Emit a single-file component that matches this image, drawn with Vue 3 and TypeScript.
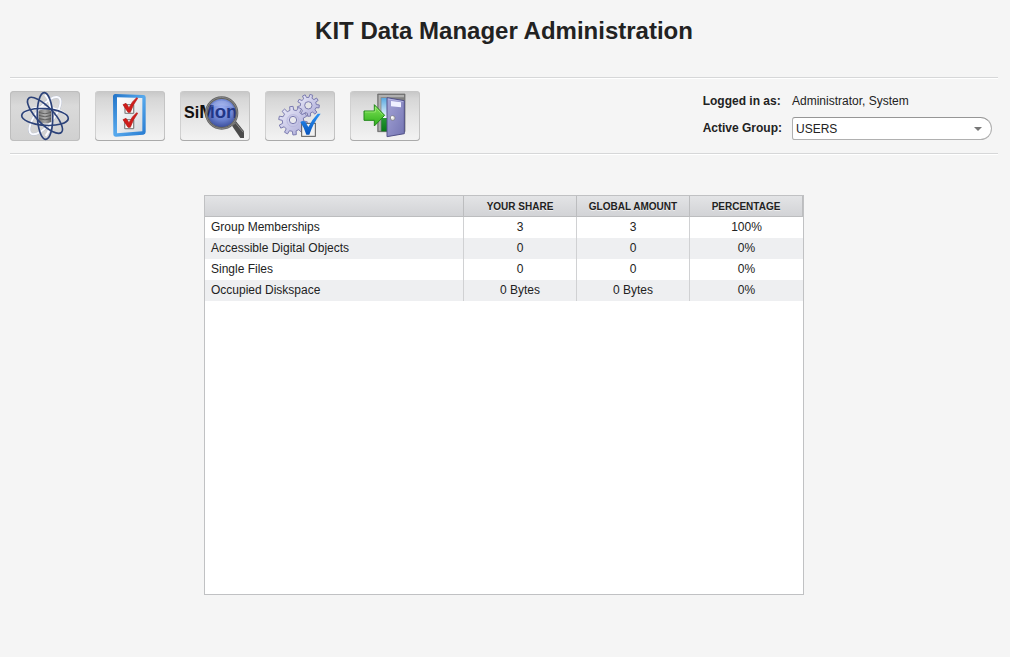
<script setup lang="ts">
import { ref } from 'vue'

interface StatRow {
  name: string
  share: string
  total: string
  percentage: string
}

const activeView = ref('overview')
const group = ref('USERS')
const groups: string[] = ['USERS']

const rows: StatRow[] = [
  { name: 'Group Memberships', share: '3', total: '3', percentage: '100%' },
  { name: 'Accessible Digital Objects', share: '0', total: '0', percentage: '0%' },
  { name: 'Single Files', share: '0', total: '0', percentage: '0%' },
  { name: 'Occupied Diskspace', share: '0 Bytes', total: '0 Bytes', percentage: '0%' },
]

// Outline of a cog centred on the origin.
function gear(teeth: number, inner: number, outer: number, turn: number): string {
  const points: string[] = []
  const step = (Math.PI * 2) / teeth
  for (let i = 0; i < teeth; i++) {
    const mid = i * step + turn
    const corners: [number, number][] = [
      [-0.28, inner],
      [-0.19, outer],
      [0.19, outer],
      [0.28, inner],
    ]
    for (const [offset, radius] of corners) {
      const angle = mid + offset * step
      points.push(`${(Math.cos(angle) * radius).toFixed(1)} ${(Math.sin(angle) * radius).toFixed(1)}`)
    }
  }
  return `M${points.join('L')}Z`
}

const largeGear = gear(10, 32, 43, 0.2)
const smallGear = gear(9, 24, 33, 0.1)
</script>

<template>
  <div class="page">
    <h1 class="title">KIT Data Manager Administration</h1>

    <header class="bar">
      <nav class="tools" aria-label="Views">
        <button type="button" class="tool" :class="{ active: activeView === 'overview' }" aria-label="Overview" @click="activeView = 'overview'">
          <svg viewBox="15 18 210 150" aria-hidden="true">
            <defs>
              <linearGradient id="disk" x1="0" x2="1" y1="0" y2="0">
                <stop offset="0" stop-color="#6f6f6f" />
                <stop offset=".5" stop-color="#a9a9a9" />
                <stop offset="1" stop-color="#626262" />
              </linearGradient>
            </defs>
            <g fill="none" stroke="#b4bccf" stroke-width="8">
              <ellipse cx="120" cy="92" rx="68" ry="26" transform="rotate(-52 120 92)" />
            </g>
            <g fill="none" stroke="#fafbff" stroke-width="6">
              <ellipse cx="120" cy="92" rx="68" ry="26" transform="rotate(-52 120 92)" />
              <path d="M120 29q19 20 19 68q-2 38-17 56M55 84q26-18 66-17q50 4 64 27" />
            </g>
            <path d="M101 77q19-9 38 0v34q-19 8-38 0z" fill="url(#disk)" />
            <path d="M102 83q18 7 36 0M102 92q18 7 36 0M102 101q18 7 36 0" fill="none" stroke="#454545" stroke-width="2" />
            <path d="M103 86q17 7 34 0M103 95q17 7 34 0" fill="none" stroke="#ccc" stroke-width="1" />
            <g fill="none" stroke="#2c4279" stroke-width="5">
              <ellipse cx="120" cy="96" rx="70" ry="25" transform="rotate(4 120 96)" />
              <ellipse cx="120" cy="93" rx="70" ry="23" transform="rotate(88 120 93)" />
              <ellipse cx="120" cy="91" rx="71" ry="25" transform="rotate(46 120 91)" />
            </g>
          </svg>
        </button>

        <button type="button" class="tool" :class="{ active: activeView === 'tasks' }" aria-label="Tasks" @click="activeView = 'tasks'">
          <svg viewBox="15 18 210 150" aria-hidden="true">
            <defs>
              <linearGradient id="frame" x1="0" x2="1" y1="0" y2="1">
                <stop offset="0" stop-color="#2172c6" />
                <stop offset=".5" stop-color="#57a9ed" />
                <stop offset="1" stop-color="#2478cf" />
              </linearGradient>
              <linearGradient id="sheet" x1="0" x2="1" y1="0" y2="1">
                <stop offset="0" stop-color="#ffffff" />
                <stop offset="1" stop-color="#d5d9de" />
              </linearGradient>
            </defs>
            <path d="M76 27l84 3q7 0 7 7v104q0 7-7 8l-82 6q-8 0-8-8l-1-112q0-8 7-8z" fill="url(#frame)" />
            <path d="M81 37l76 2v100l-76 6z" fill="url(#sheet)" />
            <g fill="#f8f8f8" stroke="#8a8a8a" stroke-width="4">
              <rect x="105" y="59" width="26" height="26" rx="2" />
              <rect x="104" y="104" width="27" height="27" rx="2" />
            </g>
            <g fill="#d01c1a" stroke="#b01412" stroke-width="2" stroke-linejoin="round">
              <path d="M99 59l9-4 9 13q9-19 23-30l3 2q-15 20-22 42h-7z" />
              <path d="M99 104l9-4 9 13q9-19 23-30l3 2q-15 20-22 42h-7z" />
            </g>
          </svg>
        </button>

        <button type="button" class="tool" :class="{ active: activeView === 'simon' }" aria-label="SiMon" @click="activeView = 'simon'">
          <svg viewBox="15 18 210 150" aria-hidden="true">
            <defs>
              <radialGradient id="lens" cx=".5" cy=".35" r=".65">
                <stop offset="0" stop-color="#a3b5f5" />
                <stop offset=".6" stop-color="#6b82d0" />
                <stop offset="1" stop-color="#3c4f9c" />
              </radialGradient>
              <linearGradient id="ink" gradientUnits="userSpaceOnUse" x1="98" x2="102" y1="0" y2="0">
                <stop offset="0" stop-color="#111" />
                <stop offset="1" stop-color="#203687" />
              </linearGradient>
              <clipPath id="lensEdge"><rect x="15" y="18" width="169" height="150" /></clipPath>
            </defs>
            <path d="M171 122l12-13 24 30v20h-11z" fill="#4b4b4b" />
            <path d="M174 121l7-8 24 29" fill="none" stroke="#8b8b8b" stroke-width="3" />
            <circle cx="140" cy="84" r="43" fill="url(#lens)" />
            <g clip-path="url(#lensEdge)">
              <text x="27" y="98" class="mark">Si<tspan class="magnified">Mon</tspan></text>
            </g>
            <path d="M105 68a39 39 0 0 1 70 0q-35-15-70 0z" fill="#fff" opacity=".15" />
            <circle cx="140" cy="84" r="46" fill="none" stroke="#626262" stroke-width="8" />
            <circle cx="140" cy="84" r="47" fill="none" stroke="#999" stroke-width="2" />
          </svg>
        </button>

        <button type="button" class="tool" :class="{ active: activeView === 'settings' }" aria-label="Settings" @click="activeView = 'settings'">
          <svg viewBox="15 18 210 150" aria-hidden="true">
            <defs>
              <linearGradient id="gearFill" x1="0" x2="1" y1="0" y2="1">
                <stop offset="0" stop-color="#eeeefb" />
                <stop offset="1" stop-color="#a9a8d6" />
              </linearGradient>
              <linearGradient id="tickFill" x1="0" x2="0" y1="0" y2="1">
                <stop offset="0" stop-color="#2b93f4" />
                <stop offset="1" stop-color="#0753bd" />
              </linearGradient>
            </defs>
            <g transform="translate(145 61)" stroke="#7c7cb0" stroke-width="3" stroke-linejoin="round">
              <path :d="smallGear" fill="url(#gearFill)" />
              <circle r="11" fill="#e4e4e7" />
            </g>
            <g transform="translate(99 107)" stroke="#7c7cb0" stroke-width="3" stroke-linejoin="round">
              <path :d="largeGear" fill="url(#gearFill)" />
              <circle r="18" fill="none" stroke="#bab9df" />
              <circle cy="-2" r="11" fill="#e9e9ed" />
            </g>
            <rect x="125" y="115" width="41" height="39" fill="#f1f1f1" stroke="#575757" stroke-width="3" />
            <path d="M121 111q8-6 15-1l9 16q12-24 28-40h9q-23 29-34 63h-9q-7-22-18-38z" fill="url(#tickFill)" />
          </svg>
        </button>

        <button type="button" class="tool" :class="{ active: activeView === 'logout' }" aria-label="Log out" @click="activeView = 'logout'">
          <svg viewBox="15 18 210 150" aria-hidden="true">
            <defs>
              <linearGradient id="sky" x1="0" x2="0" y1="0" y2="1">
                <stop offset="0" stop-color="#5aa9e0" />
                <stop offset=".6" stop-color="#f4fbff" />
                <stop offset=".61" stop-color="#279735" />
                <stop offset="1" stop-color="#087817" />
              </linearGradient>
              <linearGradient id="door" x1="0" x2="1" y1="0" y2="1">
                <stop offset="0" stop-color="#a5a4d7" />
                <stop offset="1" stop-color="#7475b3" />
              </linearGradient>
              <linearGradient id="arrow" x1="0" x2="0" y1="0" y2="1">
                <stop offset="0" stop-color="#83e45a" />
                <stop offset="1" stop-color="#2cae19" />
              </linearGradient>
            </defs>
            <path d="M98 27h82v113H98z" fill="#808080" stroke="#606060" stroke-width="2" />
            <path d="M101 30h76v7h-70v100h-6z" fill="#b0b0b0" />
            <path d="M109 39h28v100h-28z" fill="url(#sky)" />
            <path d="M126 38l52 9v99l-52 9z" fill="url(#door)" stroke="#535389" stroke-width="3" />
            <path d="M129 42l46 8" fill="none" stroke="#c3c3eb" stroke-width="2" />
            <path d="M138 48l30 4v15l-30-3z" fill="#eff0ff" />
            <path d="M57 78h31V59l31 32-31 32v-17H57z" fill="url(#arrow)" stroke="#218819" stroke-width="3" stroke-linejoin="round" />
            <path d="M60 81h31V66l22 24" fill="none" stroke="#a8ef84" stroke-width="2" />
            <circle cx="143" cy="99" r="7" fill="#e4e4e4" stroke="#777" stroke-width="2" />
            <circle cx="141" cy="97" r="3" fill="#fff" />
          </svg>
        </button>
      </nav>

      <div class="session">
        <span class="label">Logged in as:</span>
        <span>Administrator, System</span>
        <label class="label" for="group">Active Group:</label>
        <div class="combo">
          <select id="group" v-model="group">
            <option v-for="g in groups" :key="g" :value="g">{{ g }}</option>
          </select>
          <svg class="caret" viewBox="0 0 8 4" aria-hidden="true"><path d="M0 0h8L4 4z" fill="#777" /></svg>
        </div>
      </div>
    </header>

    <main class="panel">
      <table>
        <colgroup>
          <col class="wide" />
          <col />
          <col />
          <col />
        </colgroup>
        <thead>
          <tr>
            <th scope="col" aria-label="Statistic"></th>
            <th scope="col">Your Share</th>
            <th scope="col">Global Amount</th>
            <th scope="col">Percentage</th>
          </tr>
        </thead>
        <tbody>
          <tr v-for="row in rows" :key="row.name">
            <td>{{ row.name }}</td>
            <td>{{ row.share }}</td>
            <td>{{ row.total }}</td>
            <td>{{ row.percentage }}</td>
          </tr>
        </tbody>
      </table>
    </main>
  </div>
</template>

<style>
body {
  background: #f5f5f5;
}
</style>

<style scoped>
.page {
  box-sizing: border-box;
  min-height: 100vh;
  padding: 16px 12px 62px 10px;
  display: flex;
  flex-direction: column;
  background: #f5f5f5;
  color: #222;
  font-family: "Liberation Sans", Arial, sans-serif;
  font-size: 12px;
  line-height: 16px;
}

.title {
  margin: 0 0 31px;
  font-size: 24px;
  line-height: 30px;
  text-align: center;
}

.bar {
  display: flex;
  align-items: center;
  justify-content: space-between;
  gap: 16px;
  padding: 13px 6px 12px 0;
  border-top: 1px solid #d6d7d8;
  border-bottom: 1px solid #d6d7d8;
  box-shadow: inset 0 1px #fff, 0 1px #fff;
}

.tools {
  display: flex;
  gap: 15px;
}

.tool {
  box-sizing: border-box;
  width: 70px;
  height: 50px;
  padding: 0;
  border: 0;
  border-radius: 4px;
  background: linear-gradient(#c6c6c6, #d6d6d6 15%, #e4e4e4 50%, #f3f3f3);
  box-shadow: inset 0 -1px #aaa, inset 1px 0 #d0d0d0, inset -1px 0 #c4c4c4;
  cursor: pointer;
}

.tool.active {
  background: linear-gradient(#c8c8c8, #dadada 30%, #d0d0d0);
  box-shadow: inset 0 0 0 1px #bebebe;
}

.tool svg {
  display: block;
  width: 100%;
  height: 100%;
}

.mark {
  font-family: "Liberation Sans", Arial, sans-serif;
  font-size: 48px;
  font-weight: bold;
  fill: url(#ink);
}

.magnified {
  font-size: 56px;
}

.session {
  display: grid;
  grid-template-columns: auto 200px;
  align-items: center;
  column-gap: 10px;
  row-gap: 8px;
}

.label {
  font-weight: bold;
}

.combo {
  position: relative;
}

.combo select {
  appearance: none;
  display: block;
  box-sizing: border-box;
  width: 100%;
  height: 23px;
  padding: 1px 24px 0 3px;
  border: 1px solid #b0b0b0;
  border-top-color: #969696;
  border-radius: 3px 12px 12px 3px;
  background: #fff;
  color: #222;
  font: inherit;
}

.caret {
  position: absolute;
  top: 10px;
  right: 10px;
  width: 8px;
  height: 4px;
  pointer-events: none;
}

.panel {
  box-sizing: border-box;
  width: 100%;
  max-width: 600px;
  flex: 1;
  margin: 41px auto 0;
  border: 1px solid #c0c1c3;
  background: #fff;
}

table {
  width: 100%;
  table-layout: fixed;
  border-collapse: separate;
  border-spacing: 0;
}

col {
  width: 113px;
}

col.wide {
  width: auto;
}

th,
td {
  box-sizing: border-box;
  height: 21px;
  padding: 0 6px 2px;
  border-right: 1px solid #d0d1d3;
  text-align: center;
}

th {
  padding: 2px 6px 0;
  border-right-color: #bcbdbf;
  border-bottom: 1px solid #bcbdbf;
  background: linear-gradient(#e3e4e6, #d2d3d6);
  font-size: 10px;
  text-transform: uppercase;
  text-shadow: 0 1px #eee;
}

td:first-child {
  text-align: left;
}

td:last-child {
  border-right: 0;
}

tbody tr:nth-child(even) {
  background: #eeeff1;
}
</style>
